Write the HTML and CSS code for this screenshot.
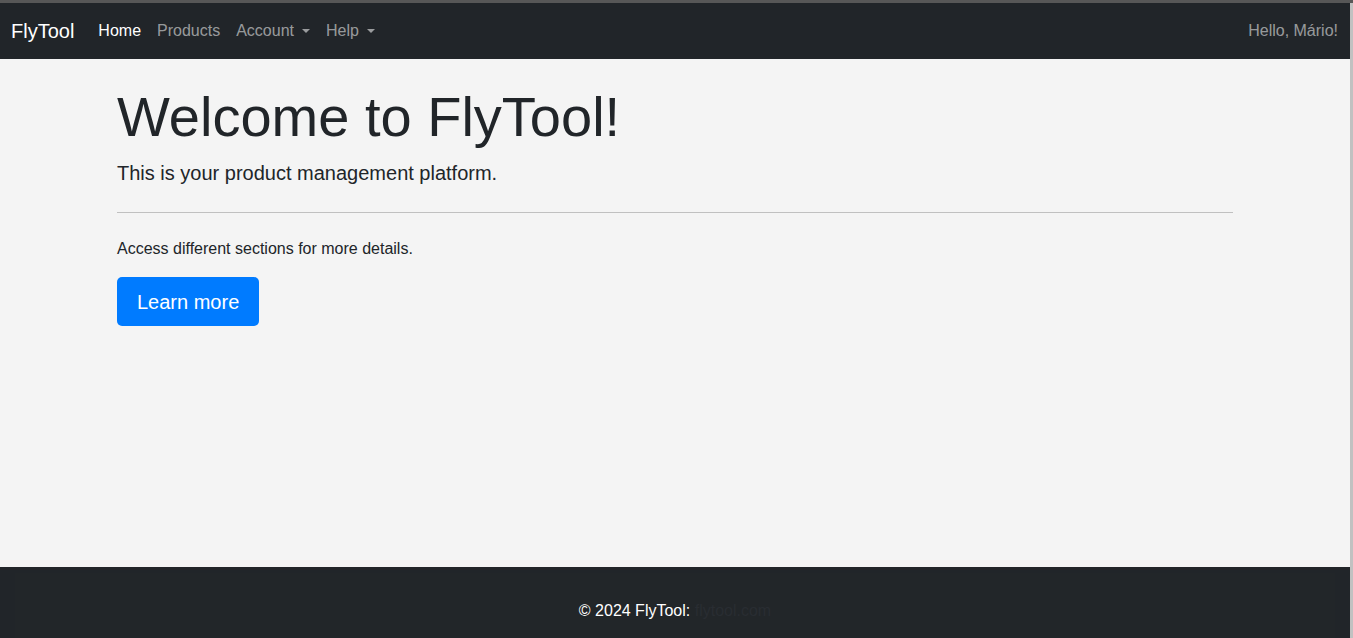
FILE: index.html
```html
<!DOCTYPE html>
<html lang="pt">
<head>
<meta charset="utf-8">
<title>FlyTool</title>
<link rel="stylesheet" href="styles.css">
</head>
<body>
<div class="frame">
  <div class="page">
    <nav class="navbar">
      <a class="brand" href="#">FlyTool</a>
      <ul class="nav">
        <li><a class="nav-link active" href="#">Home</a></li>
        <li><a class="nav-link" href="#">Products</a></li>
        <li><a class="nav-link dropdown" href="#">Account</a></li>
        <li><a class="nav-link dropdown" href="#">Help</a></li>
      </ul>
      <span class="greeting">Hello, Mário!</span>
    </nav>
    <main class="main">
      <div class="container">
        <h1 class="display">Welcome to FlyTool!</h1>
        <p class="lead">This is your product management platform.</p>
        <hr class="divider">
        <p class="text">Access different sections for more details.</p>
        <a class="btn" href="#">Learn more</a>
      </div>
    </main>
    <footer class="footer">
      <div class="footer-inner">
        <p class="copy">© 2024 FlyTool: <a class="footer-link" href="#">flytool.com</a></p>
      </div>
    </footer>
  </div>
  <div class="scroll-strip"></div>
</div>
</body>
</html>
```

FILE: styles.css
```css
* { box-sizing: border-box; }
html, body { margin: 0; padding: 0; height: 100%; overflow: hidden; }
body {
  font-family: "Liberation Sans", Arial, sans-serif;
  color: #212529;
  background: #f4f4f4;
  border-top: 3px solid #575757;
}
.frame {
  display: flex;
  height: 635px;
}
.page {
  width: 1350px;
  display: flex;
  flex-direction: column;
  height: 100%;
}
.scroll-strip {
  flex: 1;
  background: #c1c1c1;
}
.navbar {
  height: 56px;
  background: #212529;
  display: flex;
  align-items: center;
  padding: 0 12px 0 11px;
}
.brand {
  font-size: 20px;
  color: #fff;
  text-decoration: none;
  margin-right: 16px;
  line-height: 30px;
}
.nav {
  list-style: none;
  display: flex;
  margin: 0;
  padding: 0;
}
.nav-link {
  display: inline-flex;
  align-items: center;
  padding: 8px;
  font-size: 16px;
  line-height: 24px;
  color: rgba(255, 255, 255, 0.55);
  text-decoration: none;
}
.nav-link.active { color: #fff; }
.nav-link.dropdown::after {
  content: "";
  display: inline-block;
  margin-left: 8px;
  border-top: 4.5px solid currentColor;
  border-left: 4px solid transparent;
  border-right: 4px solid transparent;
  vertical-align: middle;
}
.greeting {
  margin-left: auto;
  font-size: 16px;
  color: rgba(255, 255, 255, 0.55);
}
.main {
  flex: 0 0 508px;
  background: #f4f4f4;
}
.container {
  width: 1140px;
  margin: 0 auto;
  padding: 24px 12px 0;
}
.display {
  font-size: 56px;
  font-weight: 300;
  line-height: 1.2;
  margin: 0 0 8px;
}
.lead {
  font-size: 20px;
  line-height: 1.5;
  margin: 0;
}
.divider {
  border: 0;
  border-top: 1px solid #c0c0c0;
  margin: 24px 0;
}
.text {
  font-size: 16px;
  line-height: 24px;
  margin: 0 0 16px;
}
.btn {
  display: inline-block;
  background: #007bff;
  color: #fff;
  text-decoration: none;
  font-size: 20px;
  line-height: 30px;
  padding: 10px 20px 9px;
  border-radius: 5px;
}
.footer {
  flex: 1;
  background: #212529;
  padding: 6px 15px 0;
}
.footer-inner {
  background: #222629;
  height: 100%;
  padding-top: 26px;
  text-align: center;
}
.copy {
  margin: 0;
  font-size: 16px;
  line-height: 24px;
  color: #fff;
}
.footer-link {
  color: #292d32;
  text-decoration: none;
}
```
